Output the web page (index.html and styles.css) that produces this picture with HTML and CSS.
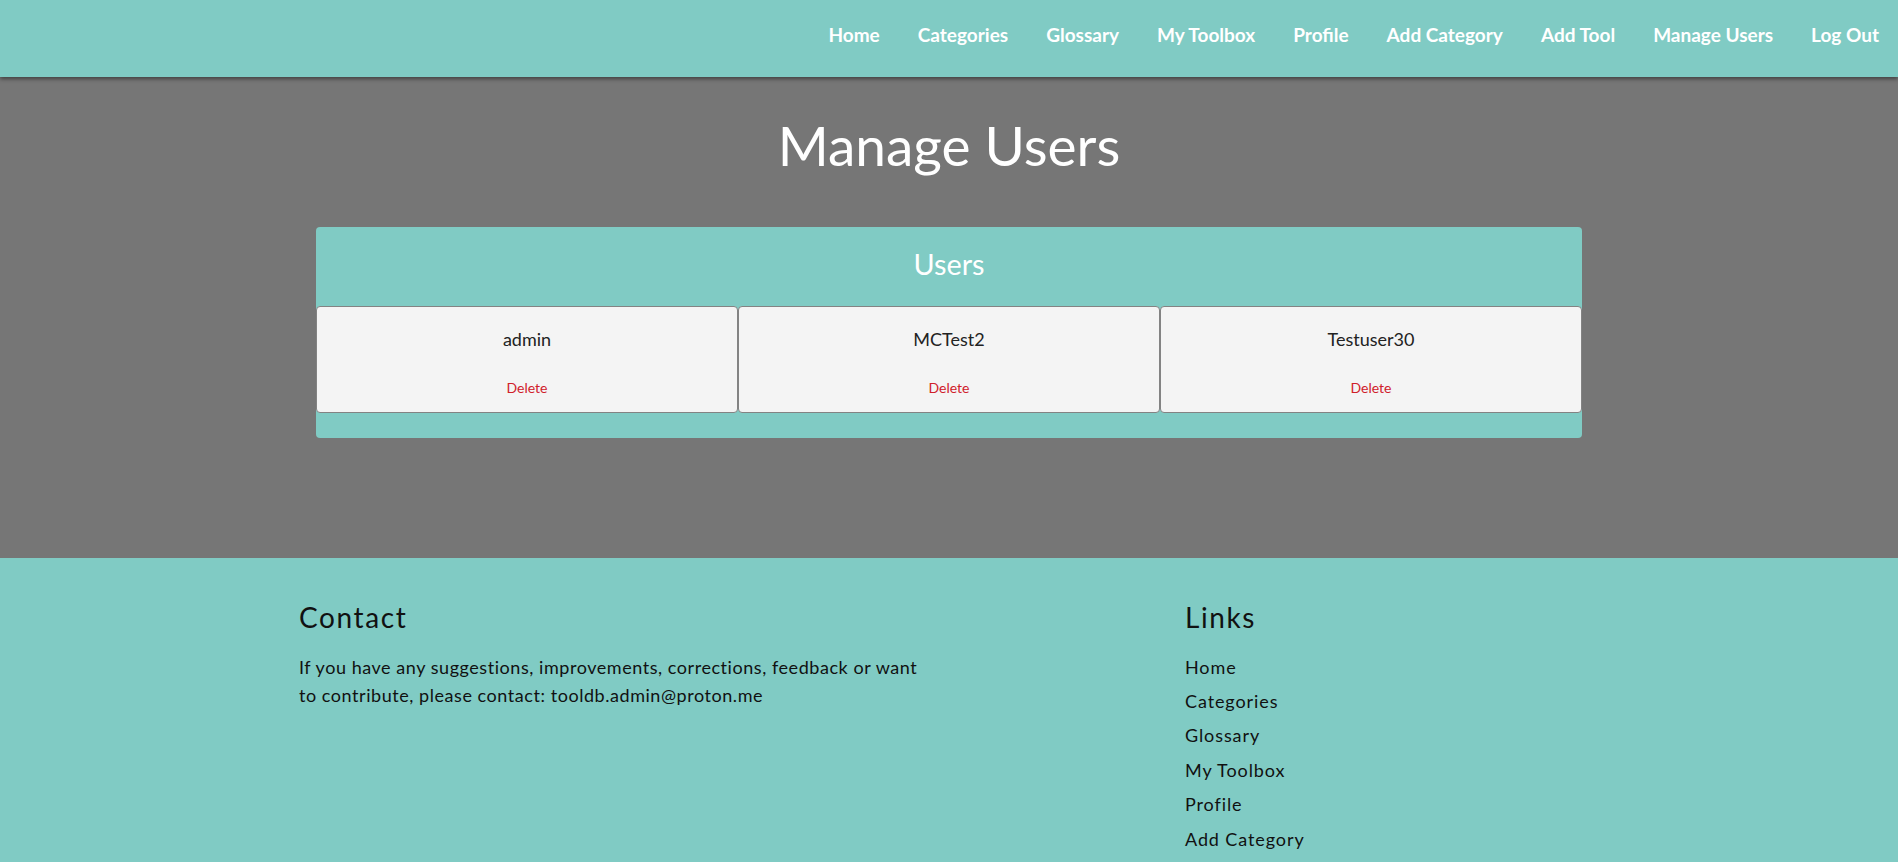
FILE: index.html
```html
<!DOCTYPE html>
<html lang="en">
<head>
<meta charset="utf-8">
<title>Manage Users</title>
<link rel="stylesheet" href="styles.css">
</head>
<body>
<header class="topbar">
  <nav class="nav">
    <a href="#">Home</a>
    <a href="#">Categories</a>
    <a href="#">Glossary</a>
    <a href="#">My Toolbox</a>
    <a href="#">Profile</a>
    <a href="#">Add Category</a>
    <a href="#">Add Tool</a>
    <a href="#">Manage Users</a>
    <a href="#">Log Out</a>
  </nav>
</header>
<main class="main">
  <h1 class="page-title">Manage Users</h1>
  <section class="panel">
    <h2 class="panel-title">Users</h2>
    <div class="user-list">
      <div class="user-card">
        <div class="user-name">admin</div>
        <a class="user-delete" href="#">Delete</a>
      </div>
      <div class="user-card">
        <div class="user-name">MCTest2</div>
        <a class="user-delete" href="#">Delete</a>
      </div>
      <div class="user-card">
        <div class="user-name">Testuser30</div>
        <a class="user-delete" href="#">Delete</a>
      </div>
    </div>
  </section>
</main>
<footer class="footer">
  <div class="footer-inner">
    <div class="footer-contact">
      <h3 class="footer-title">Contact</h3>
      <p class="footer-text">If you have any suggestions, improvements, corrections, feedback or want to contribute, please contact: tooldb.admin@proton.me</p>
    </div>
    <div class="footer-links">
      <h3 class="footer-title">Links</h3>
      <ul class="link-list">
        <li><a href="#">Home</a></li>
        <li><a href="#">Categories</a></li>
        <li><a href="#">Glossary</a></li>
        <li><a href="#">My Toolbox</a></li>
        <li><a href="#">Profile</a></li>
        <li><a href="#">Add Category</a></li>
        <li><a href="#">Add Tool</a></li>
        <li><a href="#">Manage Users</a></li>
      </ul>
    </div>
  </div>
</footer>
</body>
</html>
```
FILE: styles.css
```css
* { box-sizing: border-box; }
html, body { margin: 0; padding: 0; }
body {
  font-family: "Lato", "Liberation Sans", sans-serif;
  background: #767676;
  color: #222;
}
a { text-decoration: none; color: inherit; }

.topbar {
  position: relative;
  z-index: 2;
  height: 77px;
  background: #80cbc4;
  box-shadow: 0 2px 4px rgba(0,0,0,0.45);
  display: flex;
  justify-content: flex-end;
  align-items: center;
}
.nav {
  display: flex;
  align-items: center;
}
.nav a {
  color: #fff;
  font-weight: 700;
  font-size: 19px;
  padding: 0 19px;
  line-height: 20px;
  margin-top: -7px;
}

.main {
  min-height: 481px;
  padding: 35px 0 40px;
}
.page-title {
  margin: 0;
  text-align: center;
  color: #fff;
  font-weight: 400;
  font-size: 55px;
  line-height: 1.2;
}
.panel {
  width: 1266px;
  margin: 49px auto 0;
  background: #80cbc4;
  border-radius: 4px;
  padding-bottom: 25px;
}
.panel-title {
  margin: 0;
  padding: 20px 0 24px;
  text-align: center;
  color: #fff;
  font-weight: 400;
  font-size: 28.8px;
  line-height: 1.2;
}
.user-list {
  display: flex;
}
.user-card {
  flex: 1;
  background: #f4f4f4;
  border: 1px solid #838383;
  border-radius: 4px;
  height: 107px;
  padding-top: 22px;
  display: flex;
  flex-direction: column;
  align-items: center;
}
.user-name {
  font-size: 18px;
  line-height: 1.2;
  color: #222;
}
.user-delete {
  margin-top: 30px;
  font-size: 14px;
  line-height: 1.2;
  color: #d0202a;
}

.footer {
  background: #80cbc4;
  padding: 43px 0 40px;
  color: #111;
}
.footer-inner {
  width: 1300px;
  margin: 0 auto;
  display: grid;
  grid-template-columns: 886px 1fr;
}
.footer-title {
  margin: 0;
  font-weight: 400;
  font-size: 28px;
  line-height: 1.2;
  letter-spacing: 1.6px;
}
.footer-text {
  margin: 18px 0 0;
  width: 628px;
  font-size: 18px;
  line-height: 28px;
  letter-spacing: 0.55px;
}
.link-list {
  list-style: none;
  margin: 15px 0 0;
  padding: 0;
}
.link-list li {
  font-size: 18px;
  line-height: 34.4px;
  letter-spacing: 0.9px;
}
```
